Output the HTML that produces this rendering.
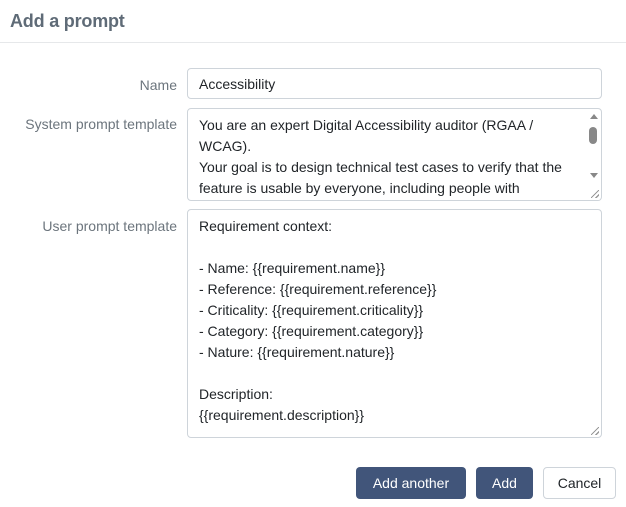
<!DOCTYPE html>
<html><head><style>
*{box-sizing:border-box;margin:0;padding:0}
body{width:626px;height:507px;background:#fff;font-family:"Liberation Sans",sans-serif;font-size:14px;color:#212529;position:relative;overflow:hidden}
.h{position:absolute;left:10px;top:11px;font-size:18px;font-weight:bold;color:#5f6b77;letter-spacing:-0.2px}
.sep{position:absolute;left:0;right:0;top:42px;border-top:1px solid #e6e8ea}
.lbl{position:absolute;right:449px;color:#6c757d;text-align:right;white-space:nowrap}
.box{position:absolute;left:187px;width:415px;border:1px solid #ced4da;border-radius:4px;background:#fff;padding:0 11px;line-height:21px;overflow:hidden;white-space:pre}
.btn{position:absolute;top:467px;height:32px;border-radius:4px;line-height:32px;text-align:center;font-size:14px}
.p{background:#41557a;color:#fff}
.s{border:1px solid #ced4da;color:#212529;background:#fff;line-height:30px}
.sb{position:absolute;right:1px;top:1px;width:14px;height:90px;background:#fff}
.grip{position:absolute;right:2px;bottom:2px;width:8px;height:8px;background:linear-gradient(135deg,transparent 45%,#999 45%,#999 55%,transparent 55%,transparent 75%,#999 75%,#999 85%,transparent 85%)}
</style></head><body>
<div class="h">Add a prompt</div>
<div class="sep"></div>
<div class="lbl" style="top:77px">Name</div>
<div class="box" style="top:68px;height:31px;line-height:31px">Accessibility</div>
<div class="lbl" style="top:116px">System prompt template</div>
<div class="box" style="top:108px;height:93px;padding-top:6px">You are an expert Digital Accessibility auditor (RGAA /
WCAG).
Your goal is to design technical test cases to verify that the
feature is usable by everyone, including people with<div class="sb"><div style="position:absolute;left:4px;top:4px;border:4px solid transparent;border-bottom:5px solid #888;border-top:0;width:0"></div><div style="position:absolute;left:3px;top:17px;width:8px;height:17px;background:#888;border-radius:4px"></div><div style="position:absolute;left:4px;top:63px;border:4px solid transparent;border-top:5px solid #888;border-bottom:0;width:0"></div></div><div class="grip"></div></div>
<div class="lbl" style="top:218px">User prompt template</div>
<div class="box" style="top:209px;height:229px;padding-top:6px">Requirement context:

- Name: {{requirement.name}}
- Reference: {{requirement.reference}}
- Criticality: {{requirement.criticality}}
- Category: {{requirement.category}}
- Nature: {{requirement.nature}}

Description:
{{requirement.description}}<div class="grip"></div></div>
<div class="btn p" style="left:356px;width:110px">Add another</div>
<div class="btn p" style="left:476px;width:57px">Add</div>
<div class="btn s" style="left:543px;width:73px">Cancel</div>
</body></html>
